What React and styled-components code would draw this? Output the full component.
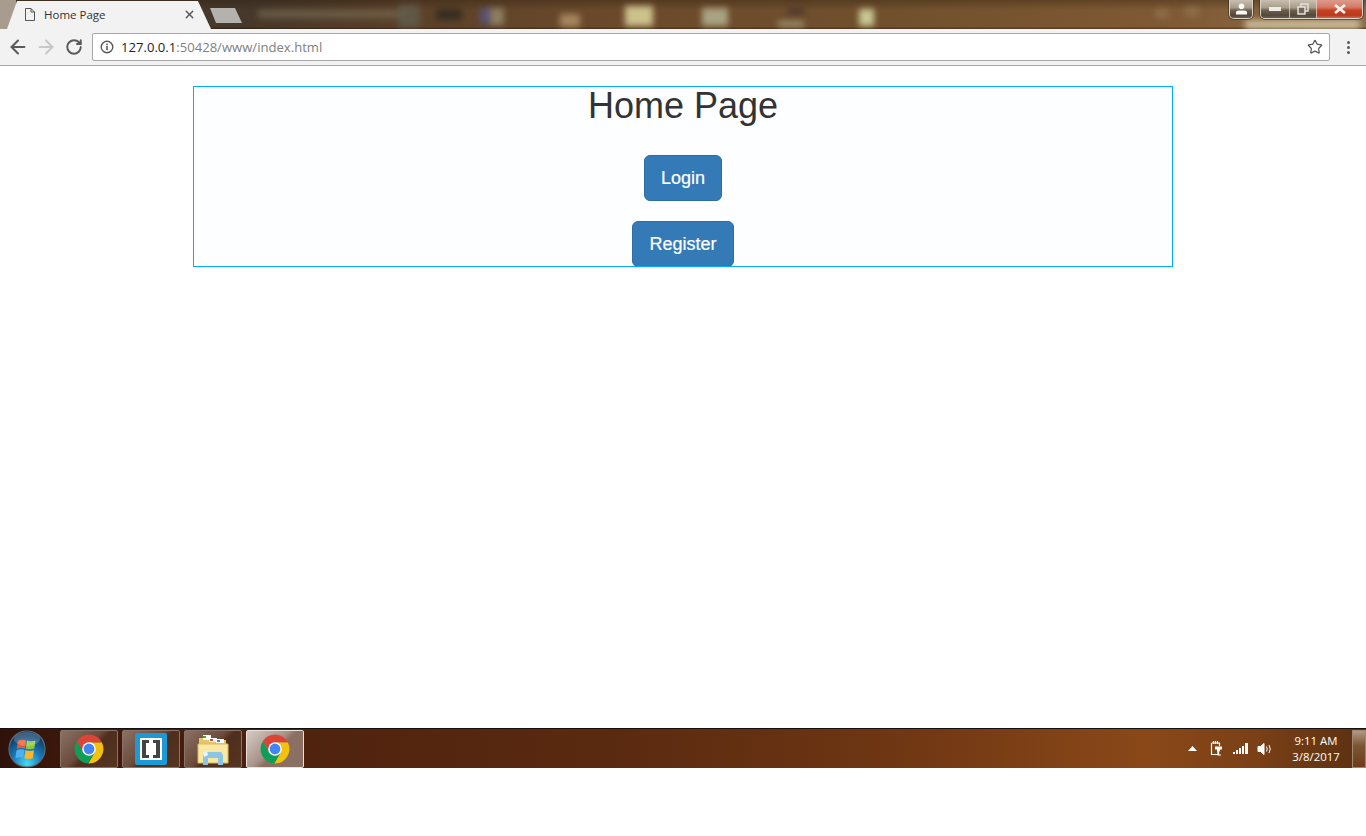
import React from 'react';
import styled, { createGlobalStyle } from 'styled-components';
import { ArrowLeft, ArrowRight, RotateCw, Star, X } from 'lucide-react';

const GlobalStyle = createGlobalStyle`
  html, body { margin: 0; padding: 0; background: #fff; }
  body { font-family: "Liberation Sans", Arial, sans-serif; }
`;

// the blurred wallpaper showing through the window's title bar
const wallpaperBlobs = [
  { left: 258, top: 10, w: 150, h: 8, c: 'rgba(125,118,95,0.55)' },
  { left: 398, top: 5, w: 22, h: 22, c: 'rgba(95,92,75,0.85)' },
  { left: 436, top: 9, w: 26, h: 11, c: 'rgba(50,42,30,0.9)' },
  { left: 480, top: 8, w: 12, h: 16, c: 'rgba(85,85,130,0.85)' },
  { left: 490, top: 8, w: 14, h: 17, c: 'rgba(150,140,110,0.8)' },
  { left: 560, top: 14, w: 20, h: 13, c: 'rgba(175,145,105,0.85)' },
  { left: 625, top: 6, w: 28, h: 20, c: 'rgba(210,200,145,0.95)' },
  { left: 702, top: 8, w: 26, h: 18, c: 'rgba(172,168,135,0.95)' },
  { left: 788, top: 8, w: 16, h: 6, c: 'rgba(70,50,48,0.85)' },
  { left: 778, top: 21, w: 26, h: 6, c: 'rgba(160,150,115,0.9)' },
  { left: 859, top: 9, w: 15, h: 17, c: 'rgba(205,205,155,0.95)' },
  { left: 1155, top: 9, w: 14, h: 9, c: 'rgba(150,125,90,0.6)' },
  { left: 1185, top: 7, w: 14, h: 9, c: 'rgba(150,125,90,0.6)' },
  { left: 1245, top: 20, w: 115, h: 9, c: 'rgba(215,205,170,0.85)' },
];

const Screen = styled.div`
  width: 1366px;
  height: 836px;
  display: flex;
  flex-direction: column;
  overflow: hidden;
  background: #fff;
`;

const TitleStrip = styled.div`
  position: relative;
  height: 29px;
  display: flex;
  overflow: hidden;
  background:
    linear-gradient(180deg, rgba(30, 20, 10, 0.3) 0%, rgba(30, 20, 10, 0) 35%, rgba(30, 20, 10, 0) 92%, rgba(30, 20, 10, 0.5) 100%),
    linear-gradient(90deg, #4a3a2a 0%, #46382a 18%, #5a4029 29%, #6b4a2b 45%, #70502d 65%, #7f5933 85%, #8a6a48 100%);
`;

const Blob = styled.div`
  position: absolute;
  top: ${p => p.$top}px;
  left: ${p => p.$left}px;
  width: ${p => p.$w}px;
  height: ${p => p.$h}px;
  background: ${p => p.$c};
  filter: blur(3px);
`;

const Corner = styled.div`
  width: 16px;
  flex: none;
  background: #a89c8e;
`;

const Tab = styled.div`
  position: relative;
  z-index: 1;
  width: 204px;
  height: 29px;
  margin-left: -9px;
  padding: 0 15px 0 17px;
  box-sizing: border-box;
  flex: none;
  display: flex;
  align-items: center;
  background: #f2f2f2;
  clip-path: polygon(10px 1px, 191px 1px, 204px 29px, 0 29px);
  color: #333;
`;

const TabTitle = styled.span`
  margin-left: 8px;
  flex: 1;
  font-family: "Open Sans", sans-serif;
  font-size: 11.5px;
`;

const NewTab = styled.div`
  position: relative;
  z-index: 1;
  width: 32px;
  height: 15px;
  margin: 8px 0 0 -1px;
  background: #b4b2af;
  clip-path: polygon(0 0, 25px 0, 32px 15px, 6px 15px);
`;

const WindowControls = styled.div`
  position: absolute;
  top: 0;
  right: 3px;
  z-index: 2;
  display: flex;
  gap: 7px;
`;

const ControlGroup = styled.div`
  height: 18px;
  display: flex;
  border: 1px solid #d8d2c8;
  border-top: none;
  border-radius: 0 0 5px 5px;
  overflow: hidden;
  box-shadow: 0 0 0 1px rgba(50, 40, 30, 0.55);
`;

const ControlButton = styled.div`
  width: ${p => p.$w}px;
  display: flex;
  align-items: center;
  justify-content: center;
  background: ${p => (p.$close
    ? 'linear-gradient(180deg, #dd9a8a 0%, #d27a66 40%, #c8401f 58%, #b83a20 85%, #cf6a50 100%)'
    : 'linear-gradient(180deg, #c9bfb0 0%, #a89c8a 42%, #6d5f4d 58%, #52483b 85%, #6a5e50 100%)')};
  & + & { border-left: 1px solid rgba(235, 230, 220, 0.65); }
`;

const Toolbar = styled.div`
  height: 36px;
  display: flex;
  align-items: center;
  background: #f2f2f2;
  border-bottom: 1px solid #a9a9a9;
`;

const NavGroup = styled.div`
  width: 92px;
  padding-left: 4px;
  box-sizing: border-box;
  flex: none;
  display: flex;
  align-items: center;
`;

const NavButton = styled.div`
  width: 28px;
  display: flex;
  justify-content: center;
`;

const Omnibox = styled.div`
  width: 1238px;
  height: 28px;
  box-sizing: border-box;
  flex: none;
  display: flex;
  align-items: center;
  padding: 0 6px 0 7px;
  background: #fff;
  border: 1px solid #a9a9a9;
  border-radius: 2px;
`;

const Url = styled.div`
  margin-left: 7px;
  flex: 1;
  font-family: "Open Sans", sans-serif;
  font-size: 13.1px;
  color: #808080;
`;

const Host = styled.span`
  color: #222;
`;

const MenuDots = styled.div`
  margin-left: 17px;
  display: flex;
  flex-direction: column;
  gap: 2px;
`;

const Dot = styled.i`
  width: 3px;
  height: 3px;
  border-radius: 50%;
  background: #5a5a5a;
`;

const Page = styled.main`
  height: 662px;
  box-sizing: border-box;
  padding-top: 20px;
  background: #fff;
`;

const Panel = styled.section`
  width: 980px;
  height: 181px;
  box-sizing: border-box;
  margin-left: 193px;
  border: 1px solid #00aaff;
  background: #fdfeff;
  display: flex;
  flex-direction: column;
  align-items: center;
  overflow: hidden;
  color: #333;
`;

const Heading = styled.h1`
  margin: 0;
  font-size: 36px;
  line-height: 38px;
  font-weight: 500;
`;

const PrimaryButton = styled.a`
  display: block;
  flex: none;
  box-sizing: border-box;
  height: 46px;
  margin-top: ${p => p.$top}px;
  padding: 10px 16px;
  font-size: 18px;
  line-height: 24px;
  color: #fff;
  background: #337ab7;
  border: 1px solid #2e6da4;
  border-radius: 6px;
  -webkit-text-stroke: 0.2px #fff;
`;

const Taskbar = styled.footer`
  height: 40px;
  display: flex;
  align-items: center;
  box-sizing: border-box;
  border-top: 1px solid #141010;
  background: linear-gradient(90deg, #2e120a 0%, #3a170b 4%, #50230f 22%, #5a2a10 45%, #6e3613 65%, #8a4818 84%, #7a4016 92%, #5a3010 100%);
`;

const StartOrb = styled.div`
  width: 60px;
  flex: none;
  display: flex;
  justify-content: center;
  padding-right: 6px;
  box-sizing: border-box;
`;

const TaskItems = styled.div`
  display: flex;
  gap: 4px;
`;

const TaskItem = styled.div`
  width: 58px;
  height: 38px;
  box-sizing: border-box;
  display: flex;
  align-items: center;
  justify-content: center;
  border: 1px solid ${p => (p.$active ? '#e8e0da' : '#8a7468')};
  border-radius: 2px;
  background: ${p => (p.$active
    ? 'linear-gradient(135deg, #d6cbc4 0%, #a89288 45%, #8b6f62 55%, #8a7064 100%)'
    : 'linear-gradient(135deg, #8a7165 0%, #6b4a3a 45%, #4f2e1f 55%, #55341f 100%)')};
`;

const Tray = styled.div`
  margin-left: auto;
  display: flex;
  align-items: center;
  height: 100%;
`;

const TrayIcons = styled.div`
  display: flex;
  align-items: center;
  gap: 9px;
`;

const TrayArrowSlot = styled.div`
  display: flex;
  margin-right: 3px;
`;

const Clock = styled.div`
  width: 64px;
  margin-left: 12px;
  text-align: center;
  color: #fff;
  font-family: "Open Sans", sans-serif;
  font-size: 11.4px;
  line-height: 16px;
`;

const ShowDesktop = styled.div`
  width: 14px;
  height: 38px;
  margin-left: 4px;
  box-sizing: border-box;
  border: 1px solid #a08870;
  background: linear-gradient(180deg, #b09a88 0%, #7d5636 40%, #6e3c18 100%);
`;

const PageIcon = () => (
  <svg width="12" height="15" viewBox="0 0 12 15" fill="none" stroke="#555" strokeWidth="1">
    <path d="M1.5 1.5h5.5l3.5 3.5v8.5h-9z" />
    <path d="M7 1.5v3.5h3.5" />
  </svg>
);

const InfoIcon = () => (
  <svg width="14" height="14" viewBox="0 0 14 14" fill="none">
    <circle cx="7" cy="7" r="5.8" stroke="#5a5a5a" strokeWidth="1.4" />
    <rect x="6.2" y="6" width="1.6" height="4.2" fill="#5a5a5a" />
    <rect x="6.2" y="3.6" width="1.6" height="1.6" fill="#5a5a5a" />
  </svg>
);

const AvatarIcon = () => (
  <svg width="13" height="12" viewBox="0 0 13 12" fill="#fafaf6">
    <circle cx="6.5" cy="3.2" r="2.8" />
    <path d="M1 11.5V9.5q0-2 3-2h5q3 0 3 2v2z" />
  </svg>
);

const MinimizeIcon = () => (
  <svg width="12" height="4" viewBox="0 0 12 4">
    <rect width="12" height="4" fill="#eeebe6" />
  </svg>
);

const RestoreIcon = () => (
  <svg width="12" height="12" viewBox="0 0 12 12" fill="none" stroke="#e4e0da" strokeWidth="1.5">
    <rect x="4" y="1" width="7" height="7" />
    <rect x="1" y="4" width="7" height="7" fill="#75685a" />
  </svg>
);

const CloseIcon = () => (
  <svg width="14" height="10" viewBox="0 0 14 10" fill="none" stroke="#f1eeea" strokeWidth="2.8">
    <path d="M2 1l10 8M12 1L2 9" />
  </svg>
);

const ChromeLogo = () => (
  <svg width="30" height="30" viewBox="0 0 30 30">
    <path d="M9.28 18.3L2.83 7.13A14.5 14.5 0 0 1 27.9 8.4H15z" fill="#db4437" />
    <path d="M15 8.4h12.9A14.5 14.5 0 0 1 14.27 29.47L20.72 18.3z" fill="#f4c20d" />
    <path d="M20.72 18.3L14.27 29.47A14.5 14.5 0 0 1 2.83 7.13L9.28 18.3z" fill="#0f9d58" />
    <circle cx="15" cy="15" r="6.8" fill="#fff" />
    <circle cx="15" cy="15" r="5.4" fill="#4285f4" />
  </svg>
);

const BracketsLogo = () => (
  <svg width="32" height="32" viewBox="0 0 32 32">
    <rect width="32" height="32" rx="2" fill="#1d9ad6" />
    <rect x="5" y="5" width="22" height="22" fill="#fff" />
    <path d="M7 7h7v3h-3v12h3v3H7zM25 7h-7v3h3v12h-3v3h7z" fill="#444" />
  </svg>
);

const FolderLogo = () => (
  <svg width="32" height="32" viewBox="0 0 32 32">
    <path d="M2 5h10l2 2h15v6H2z" fill="#e6c56a" />
    <rect x="6" y="2" width="8" height="5" fill="#fff" />
    <rect x="6" y="3" width="3" height="2" fill="#2eb82e" />
    <rect x="12" y="5" width="8" height="4" fill="#fff" />
    <rect x="13" y="6" width="3" height="2" fill="#d84a3a" />
    <rect x="19" y="6" width="8" height="4" fill="#fff" />
    <rect x="20" y="7" width="3" height="2" fill="#3a8ad8" />
    <path d="M1 11h30v19H1z" fill="#f8e8a4" stroke="#d9b95e" />
    <path d="M6 32V22l2-3h16l2 3v10h-5v-7H11v7z" fill="#8cc4e4" />
    <path d="M6 20l4-2 1 4-4 2z" fill="#e8f6fc" />
  </svg>
);

const WindowsOrb = () => (
  <svg width="38" height="38" viewBox="0 0 38 38">
    <defs>
      <radialGradient id="orb" cx="50%" cy="90%" r="80%">
        <stop offset="0%" stopColor="#45dcf5" />
        <stop offset="50%" stopColor="#1b78b8" />
        <stop offset="100%" stopColor="#0e3a66" />
      </radialGradient>
    </defs>
    <circle cx="19" cy="19" r="18" fill="url(#orb)" stroke="#5a6a74" strokeWidth="1.2" />
    <path d="M10 11q4-2 8-.5l-1.2 8q-4-1.5-8 .5z" fill="#ec5a30" />
    <path d="M19 10.5q4 1.5 8.500 0l-1.200 8q-4.300 1.500-8.500 0z" fill="#8fc93a" />
    <path d="M8.500 20.500q4-2 8-.5l-1.200 8q-4-1.500-8 .5z" fill="#4db0f0" />
    <path d="M17.500 20.300q4.300 1.500 8.500 0l-1.200 8q-4.300 1.500-8.500 0z" fill="#fbb52d" />
    <ellipse cx="19" cy="9" rx="13" ry="7" fill="#fff" opacity="0.2" />
  </svg>
);

const TrayArrow = () => (
  <svg width="9" height="5" viewBox="0 0 9 5"><path d="M4.5 0L9 5H0z" fill="#fff" /></svg>
);

const PowerIcon = () => (
  <svg width="15" height="17" viewBox="0 0 15 17" fill="none" stroke="#fff" strokeWidth="1.2">
    <path d="M2.500 3h8v3M2.500 3v11.500h7V12" />
    <path d="M4.500 1v3M6.500 1v3M8.500 1v3" />
    <path d="M6 6.500h7v3h-2v2H8v-2H6z" fill="#fff" stroke="none" />
    <path d="M9 11v4h3" />
  </svg>
);

const SignalIcon = () => (
  <svg width="15" height="11" viewBox="0 0 15 11" fill="#fff">
    <rect x="0" y="9" width="2" height="2" />
    <rect x="3" y="7" width="2" height="4" />
    <rect x="6" y="5" width="2" height="6" />
    <rect x="9" y="3" width="2" height="8" />
    <rect x="12" y="0" width="3" height="11" />
  </svg>
);

const VolumeIcon = () => (
  <svg width="15" height="14" viewBox="0 0 15 14" fill="none" stroke="#fff">
    <path d="M1 4.500h2.500L7 1.500v11l-3.500-3H1z" fill="#fff" />
    <path d="M9.500 4.500q1.500 2.500 0 5M12 3q2.500 4 0 8" />
  </svg>
);

export default function App() {
  return (
    <Screen>
      <GlobalStyle />
      <TitleStrip>
        {wallpaperBlobs.map(b => (
          <Blob key={b.left} $left={b.left} $top={b.top} $w={b.w} $h={b.h} $c={b.c} />
        ))}
        <Corner />
        <Tab>
          <PageIcon />
          <TabTitle>Home Page</TabTitle>
          <X size={13} color="#555" strokeWidth={2.5} />
        </Tab>
        <NewTab />
        <WindowControls>
          <ControlGroup>
            <ControlButton $w={22}><AvatarIcon /></ControlButton>
          </ControlGroup>
          <ControlGroup>
            <ControlButton $w={28}><MinimizeIcon /></ControlButton>
            <ControlButton $w={26}><RestoreIcon /></ControlButton>
            <ControlButton $w={45} $close><CloseIcon /></ControlButton>
          </ControlGroup>
        </WindowControls>
      </TitleStrip>
      <Toolbar>
        <NavGroup>
          <NavButton><ArrowLeft size={22} color="#5a5a5a" strokeWidth={2.2} /></NavButton>
          <NavButton><ArrowRight size={22} color="#c8c8c8" strokeWidth={2.2} /></NavButton>
          <NavButton><RotateCw size={18} color="#5a5a5a" strokeWidth={2.6} /></NavButton>
        </NavGroup>
        <Omnibox>
          <InfoIcon />
          <Url><Host>127.0.0.1</Host>:50428/www/index.html</Url>
          <Star size={16} color="#555" strokeWidth={1.8} />
        </Omnibox>
        <MenuDots><Dot /><Dot /><Dot /></MenuDots>
      </Toolbar>
      <Page>
        <Panel>
          <Heading>Home Page</Heading>
          <PrimaryButton $top={30}>Login</PrimaryButton>
          <PrimaryButton $top={20}>Register</PrimaryButton>
        </Panel>
      </Page>
      <Taskbar>
        <StartOrb><WindowsOrb /></StartOrb>
        <TaskItems>
          <TaskItem><ChromeLogo /></TaskItem>
          <TaskItem><BracketsLogo /></TaskItem>
          <TaskItem><FolderLogo /></TaskItem>
          <TaskItem $active><ChromeLogo /></TaskItem>
        </TaskItems>
        <Tray>
          <TrayIcons>
            <TrayArrowSlot><TrayArrow /></TrayArrowSlot>
            <PowerIcon />
            <SignalIcon />
            <VolumeIcon />
          </TrayIcons>
          <Clock>9:11 AM<br />3/8/2017</Clock>
          <ShowDesktop />
        </Tray>
      </Taskbar>
    </Screen>
  );
}
